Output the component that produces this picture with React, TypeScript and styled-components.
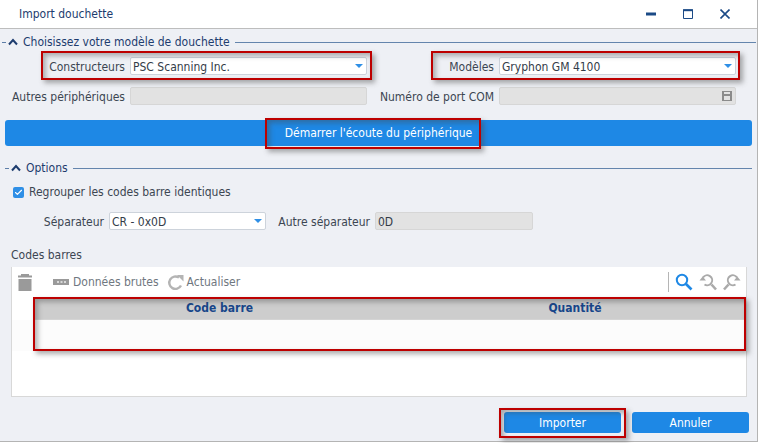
import React from "react";
import styled, { createGlobalStyle } from "styled-components";
import { Check } from "lucide-react";

const GlobalStyle = createGlobalStyle`
    html, body {
        margin: 0;
        height: 443px;
        overflow: hidden;
        background: #fff;
        font-family: "DejaVu Sans", Tahoma, sans-serif;
        font-stretch: condensed;
        font-size: 12px;
        color: #3c4652;
    }
`

const Dialog = styled.div`
    position: relative;
    box-sizing: border-box;
    width: 758px;
    height: 442px;
    background: #eef0f5;
    border-right: 1px solid #b4b4b4;
    border-bottom: 1px solid #b4b4b4;
    display: flex;
    flex-direction: column;
`

const TitleBar = styled.header`
    box-sizing: border-box;
    height: 29px;
    flex: none;
    padding: 0 27px 0 19px;
    background: #fff;
    border-bottom: 1px solid #bdbdbd;
    display: flex;
    align-items: center;
    justify-content: space-between;
    color: #1d3c6e;
`

const WindowButtons = styled.div`
    display: flex;
    align-items: center;
    gap: 27px;
`

const GroupHeader = styled.div<{ $left: number; $right: number }>`
    height: 16px;
    margin-left: ${(p) => p.$left}px;
    margin-right: ${(p) => p.$right}px;
    display: flex;
    align-items: center;
    color: #1d3c6e;
    &::before {
        content: "";
        width: 4px;
        height: 1px;
        background: #5d7ea8;
    }
    &::after {
        content: "";
        flex: 1;
        height: 1px;
        margin-left: 5px;
        background: #6485ad;
    }
`

const Chevron = styled.svg`
    width: 10px;
    height: 8px;
    margin: 0 5px 0 2px;
`

const ChooseSection = styled.section`
    margin-top: 5px;
`

const FormGrid = styled.div`
    display: grid;
    grid-template-columns: 125px 237px 122px 237px;
    column-gap: 5px;
    row-gap: 12px;
    align-items: center;
    margin-top: 7px;
`

const Label = styled.label`
    padding-top: 2px;
    text-align: right;
    white-space: nowrap;
`

const Field = styled.div<{ $disabled?: boolean }>`
    box-sizing: border-box;
    height: 18px;
    padding: 2px 3px 0 2px;
    display: flex;
    align-items: center;
    justify-content: space-between;
    white-space: nowrap;
    color: #333c48;
    border-radius: 2px;
    border: 1px solid ${(p) => (p.$disabled ? "#d6d6d6" : "#cdd3db")};
    background: ${(p) => (p.$disabled ? "#e2e2e2" : "#fff")};
`

const Caret = styled.span`
    width: 0;
    height: 0;
    margin-bottom: 2px;
    border-left: 4px solid transparent;
    border-right: 4px solid transparent;
    border-top: 4px solid #2f8fe6;
`

const SaveIcon = styled.svg`
    width: 10px;
    height: 10px;
    margin-bottom: 2px;
`

const BlueButton = styled.button`
    height: 26px;
    padding: 0;
    border: 0;
    border-radius: 3px;
    background: #1e88e5;
    color: #fff;
    font: inherit;
`

const ListenButton = styled(BlueButton)`
    display: block;
    width: 747px;
    margin: 15px 0 0 5px;
`

const OptionsSection = styled.section`
    margin-top: 14px;
`

const CheckRow = styled.div`
    display: flex;
    align-items: center;
    gap: 5px;
    margin: 9px 0 0 13px;
`

const CheckBox = styled.span`
    width: 11px;
    height: 11px;
    border-radius: 2px;
    background: #2f8fe6;
    display: flex;
    align-items: center;
    justify-content: center;
    color: #fff;
`

const SeparatorRow = styled.div`
    display: grid;
    grid-template-columns: 99px 157px 99px 158px;
    column-gap: 5px;
    align-items: center;
    margin: 13px 0 0 5px;
`

const SeparatorLabel = styled(Label)<{ $gap?: boolean }>`
    margin-left: ${(p) => (p.$gap ? 6 : 0)}px;
`

const TableTitle = styled.div`
    margin: 18px 0 0 11px;
`

const TablePanel = styled.div`
    box-sizing: border-box;
    width: 736px;
    height: 130px;
    margin: 5px 0 0 11px;
    background: #fff;
    border: 1px solid #d8d8d8;
    border-top: 0;
    display: flex;
    flex-direction: column;
`

const Toolbar = styled.div`
    box-sizing: border-box;
    height: 30px;
    flex: none;
    display: flex;
    align-items: center;
    padding: 0 5px 0 6px;
    color: #6f7780;
`

const ToolbarItem = styled.span`
    display: flex;
    align-items: center;
    gap: 3px;
    margin-right: 8px;
`

const RawDataIcon = styled.svg`
    width: 16px;
    height: 8px;
    margin: 0 4px 0 21px;
`

const ToolbarEnd = styled.div`
    margin-left: auto;
    display: flex;
    align-items: center;
    gap: 6px;
    height: 20px;
    padding-left: 6px;
    border-left: 1px solid #b5b5b5;
`

const TableHeader = styled.div`
    height: 23px;
    flex: none;
    display: grid;
    grid-template-columns: 23px 372px 1fr;
    border-bottom: 1px solid #d4d4d4;
    background: #cdcdcd;
    box-sizing: border-box;
`

const RowNumberCell = styled.div`
    background: #fff;
    border-right: 1px solid #dcdcdc;
`

const HeaderCell = styled.div`
    font-weight: 700;
    color: #17468a;
    text-align: center;
    line-height: 23px;
    padding-right: 3px;
`

const TableBody = styled.div`
    flex: 1;
    background: linear-gradient(#fcfcfc 0, #fcfcfc 31px, #fff 31px);
`

const Footer = styled.div`
    display: flex;
    justify-content: flex-end;
    gap: 11px;
    margin: 15px 8px 0 0;
`

const FooterButton = styled(BlueButton)`
    width: 117px;
    height: 21px;
`

const Highlight = styled.div<{ $x: number; $y: number; $w: number; $h: number }>`
    position: absolute;
    box-sizing: border-box;
    left: ${(p) => p.$x}px;
    top: ${(p) => p.$y}px;
    width: ${(p) => p.$w}px;
    height: ${(p) => p.$h}px;
    border: 2px solid #bd0000;
    pointer-events: none;
    box-shadow: 3px 3px 5px rgba(70, 70, 70, 0.45), inset 3px 3px 5px rgba(70, 70, 70, 0.4);
`

const GroupChevron = () => (
    <Chevron viewBox="0 0 10 8">
        <path d="M1 6.5 L5 2 L9 6.5" fill="none" stroke="#1d3c6e" strokeWidth="2" />
    </Chevron>
)

const WINDOW_BLUE = "#1b4a86"

const ZoomIcon = () => (
    <svg width="18" height="18" viewBox="0 0 18 18" fill="none" stroke="#1e88e5">
        <circle cx="7" cy="7" r="5.2" strokeWidth="2" />
        <path d="M11 11 L16.5 16.5" strokeWidth="2.6" />
    </svg>
)

const ZoomPrevIcon = () => (
    <svg width="18" height="18" viewBox="0 0 18 18" fill="none" stroke="#aaaaaa">
        <path d="M4 4.5 A5 5 0 1 1 5.5 11.5" strokeWidth="2" />
        <path d="M0.5 7.5 H7 L3.7 3.5 Z" fill="#aaaaaa" stroke="none" />
        <path d="M12.5 11.5 L17 16.5" strokeWidth="2.6" />
    </svg>
)

const ZoomNextIcon = () => (
    <svg width="18" height="18" viewBox="0 0 18 18" fill="none" stroke="#aaaaaa">
        <path d="M14 4.5 A5 5 0 1 0 12.5 11.5" strokeWidth="2" />
        <path d="M17.5 7.5 H11 L14.3 3.5 Z" fill="#aaaaaa" stroke="none" />
        <path d="M5.5 11.5 L1 16.5" strokeWidth="2.6" />
    </svg>
)

export default function App() {
    return (
        <Dialog>
            <GlobalStyle />
            <TitleBar>
                <span>Import douchette</span>
                <WindowButtons>
                    <svg width="10" height="10" viewBox="0 0 10 10">
                        <path d="M0 3.5H10V6.5H0Z" fill={WINDOW_BLUE} />
                    </svg>
                    <svg width="10" height="10" viewBox="0 0 10 10" fill="none" stroke={WINDOW_BLUE}>
                        <path d="M0.5 1H9.5V9.5H0.5Z" />
                        <path d="M0 1.2H10" strokeWidth="2" />
                    </svg>
                    <svg width="10" height="10" viewBox="0 0 10 10" fill="none" stroke={WINDOW_BLUE}>
                        <path d="M0.5 0.5L9.5 9.5M9.5 0.5L0.5 9.5" strokeWidth="1.6" />
                    </svg>
                </WindowButtons>
            </TitleBar>

            <ChooseSection>
                <GroupHeader $left={2} $right={1}>
                    <GroupChevron />
                    Choisissez votre modèle de douchette
                </GroupHeader>
                <FormGrid>
                    <Label>Constructeurs</Label>
                    <Field>PSC Scanning Inc.<Caret /></Field>
                    <Label>Modèles</Label>
                    <Field>Gryphon GM 4100<Caret /></Field>
                    <Label>Autres périphériques</Label>
                    <Field $disabled />
                    <Label>Numéro de port COM</Label>
                    <Field $disabled>
                        <span />
                        <SaveIcon viewBox="0 0 10 10">
                            <path d="M0 0H10V10H0Z M2 1V3H8V1Z M2 5V9H8V5Z" fill="#8b8b8b" fillRule="evenodd" />
                        </SaveIcon>
                    </Field>
                </FormGrid>
                <ListenButton>Démarrer l'écoute du périphérique</ListenButton>
            </ChooseSection>

            <OptionsSection>
                <GroupHeader $left={5} $right={5}>
                    <GroupChevron />
                    Options
                </GroupHeader>
                <CheckRow>
                    <CheckBox><Check size={9} strokeWidth={3} /></CheckBox>
                    Regrouper les codes barre identiques
                </CheckRow>
                <SeparatorRow>
                    <Label>Séparateur</Label>
                    <Field>CR - 0x0D<Caret /></Field>
                    <SeparatorLabel $gap>Autre séparateur</SeparatorLabel>
                    <Field $disabled>0D</Field>
                </SeparatorRow>
            </OptionsSection>

            <TableTitle>Codes barres</TableTitle>
            <TablePanel>
                <Toolbar>
                    <svg width="14" height="17" viewBox="0 0 14 17">
                        <path d="M3 0H11V1.5H14V3.5H0V1.5H3Z M0.5 5H13.5V17H0.5Z" fill="#9a9a9a" />
                    </svg>
                    <RawDataIcon viewBox="0 0 16 8">
                        <path d="M0 1H16V7H0Z" fill="#9a9a9a" />
                        <path d="M4 3H6V5H4Z M7.5 3H9.5V5H7.5Z M11 3H13V5H11Z" fill="#d8d8d8" />
                    </RawDataIcon>
                    <ToolbarItem>Données brutes</ToolbarItem>
                    <ToolbarItem>
                        <svg width="17" height="17" viewBox="0 0 17 17" fill="none">
                            <path d="M14 11.5 A6.2 6.2 0 1 1 12 3.6" stroke="#b4b4b4" strokeWidth="2.4" />
                            <path d="M10 1 H16.5 V7.5 Z" fill="#b4b4b4" />
                        </svg>
                        Actualiser
                    </ToolbarItem>
                    <ToolbarEnd>
                        <ZoomIcon />
                        <ZoomPrevIcon />
                        <ZoomNextIcon />
                    </ToolbarEnd>
                </Toolbar>
                <TableHeader>
                    <RowNumberCell />
                    <HeaderCell>Code barre</HeaderCell>
                    <HeaderCell>Quantité</HeaderCell>
                </TableHeader>
                <TableBody />
            </TablePanel>

            <Footer>
                <FooterButton>Importer</FooterButton>
                <FooterButton>Annuler</FooterButton>
            </Footer>

            <Highlight $x={41} $y={51} $w={331} $h={29} />
            <Highlight $x={431} $y={51} $w={309} $h={29} />
            <Highlight $x={265} $y={118} $w={216} $h={31} />
            <Highlight $x={33} $y={297} $w={713} $h={54} />
            <Highlight $x={499} $y={408} $w={127} $h={30} />
        </Dialog>
    );
}
